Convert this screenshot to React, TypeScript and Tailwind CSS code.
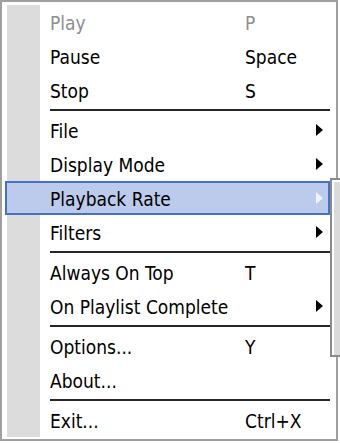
import React from "react";

type Item =
  | { sep: true }
  | {
      sep?: false;
      label: string;
      key?: string;
      sub?: boolean;
      disabled?: boolean;
      active?: boolean;
    };

const items: Item[] = [
  { label: "Play", key: "P", disabled: true },
  { label: "Pause", key: "Space" },
  { label: "Stop", key: "S" },
  { sep: true },
  { label: "File", sub: true },
  { label: "Display Mode", sub: true },
  { label: "Playback Rate", sub: true, active: true },
  { label: "Filters", sub: true },
  { sep: true },
  { label: "Always On Top", key: "T" },
  { label: "On Playlist Complete", sub: true },
  { sep: true },
  { label: "Options...", key: "Y" },
  { label: "About..." },
  { sep: true },
  { label: "Exit...", key: "Ctrl+X" },
];

function Arrow({ light }: { light?: boolean }) {
  return (
    <svg width="8" height="12" viewBox="0 0 8 12" className="shrink-0">
      <path d="M0 0 L7 6 L0 12 Z" fill={light ? "#eef2fa" : "#000"} />
    </svg>
  );
}

export default function App() {
  return (
    <div className="w-[340px] h-[443px] bg-white relative overflow-hidden">
      {/* Menu */}
      <div
        className="w-[338px] h-[441px] border-2 border-[#a0a0a0] bg-white pt-[3px] pl-[3px]"
        style={{ fontFamily: '"DejaVu Sans Condensed", "DejaVu Sans", sans-serif' }}
      >
        {items.map((it, i) => {
          if (it.sep) {
            return (
              <div key={i} className="flex h-[6px] w-[325px]">
                <div className="ml-[2px] w-[33px] bg-[#dcdcdc]" />
                <div className="ml-[10px] flex-1 flex items-center">
                  <div className="h-[2px] w-full bg-[#262626]" />
                </div>
              </div>
            );
          }
          const { label, key, sub, disabled, active } = it;
          return (
            <div
              key={i}
              className={`flex items-center h-[34px] w-[325px] text-[19px] ${
                active
                  ? "bg-[#bccbec] border-2 border-[#4670c4]"
                  : ""
              } ${disabled ? "text-[#8e8e8e]" : "text-black"}`}
            >
              {active ? (
                <div className="w-[43px] self-stretch" />
              ) : (
                <div className="ml-[2px] w-[33px] self-stretch bg-[#dcdcdc] mr-[10px]" />
              )}
              <div className="w-[195px] whitespace-nowrap leading-none pt-[3px]">{label}</div>
              <div className="w-[71px] whitespace-nowrap leading-none pt-[3px]">{key}</div>
              {sub && <Arrow light={active} />}
            </div>
          );
        })}
      </div>

      {/* Submenu edge (overlapping) */}
      <div className="absolute left-[330px] top-[178px] w-[20px] h-[179px] border-2 border-[#8a8a8a] bg-white pl-[2px] pt-[2px]">
        <div className="h-full w-full bg-[#dadada]" />
      </div>
    </div>
  );
}
